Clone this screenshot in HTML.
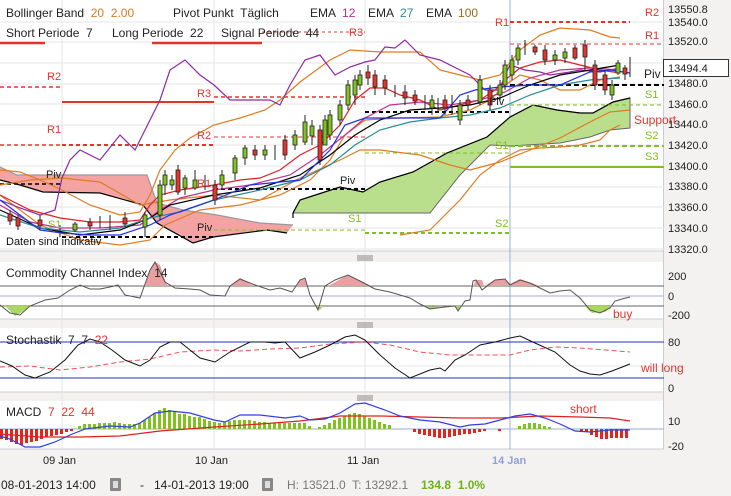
<!DOCTYPE html>
<html><head><meta charset="utf-8"><style>
body{margin:0;width:731px;height:496px;background:#f3f2f0;font-family:"Liberation Sans",sans-serif;overflow:hidden;position:relative}
svg{position:absolute;left:0;top:0}
text{font-family:"Liberation Sans",sans-serif;white-space:pre}
</style></head><body>
<svg width="731" height="496" viewBox="0 0 731 496" xml:space="preserve">
<rect x="0" y="0" width="664" height="251" fill="#fff"/>
<rect x="0" y="262" width="664" height="57" fill="#fff"/>
<rect x="0" y="328" width="664" height="64" fill="#fff"/>
<rect x="0" y="401" width="664" height="48" fill="#fff"/>
<g stroke="#c9cdd3" stroke-width="1">
<line x1="0" y1="251" x2="664" y2="251"/><line x1="0" y1="319" x2="664" y2="319"/><line x1="0" y1="392" x2="664" y2="392"/><line x1="0" y1="449" x2="664" y2="449"/>
<line x1="663.5" y1="0" x2="663.5" y2="449"/>
</g>
<g stroke="#e6e6e6" stroke-width="1">
<line x1="0" y1="22" x2="664" y2="22"/><line x1="0" y1="42" x2="664" y2="42"/><line x1="0" y1="63" x2="664" y2="63"/><line x1="0" y1="84" x2="664" y2="84"/><line x1="0" y1="104" x2="664" y2="104"/><line x1="0" y1="125" x2="664" y2="125"/><line x1="0" y1="145" x2="664" y2="145"/><line x1="0" y1="166" x2="664" y2="166"/><line x1="0" y1="187" x2="664" y2="187"/><line x1="0" y1="207" x2="664" y2="207"/><line x1="0" y1="228" x2="664" y2="228"/><line x1="0" y1="249" x2="664" y2="249"/>
<line x1="62" y1="0" x2="62" y2="449"/><line x1="214" y1="0" x2="214" y2="449"/><line x1="365" y1="0" x2="365" y2="449"/>
<line x1="0" y1="366" x2="664" y2="366"/>
</g>
<line x1="510" y1="0" x2="510" y2="449" stroke="#9aaedb"/>
<g stroke="#888"><line x1="357" y1="256" x2="373" y2="256"/><line x1="357" y1="258" x2="373" y2="258"/><line x1="357" y1="260" x2="373" y2="260"/>
<line x1="357" y1="323" x2="373" y2="323"/><line x1="357" y1="325" x2="373" y2="325"/><line x1="357" y1="327" x2="373" y2="327"/>
<line x1="357" y1="396" x2="373" y2="396"/><line x1="357" y1="398" x2="373" y2="398"/><line x1="357" y1="400" x2="373" y2="400"/></g>

<!-- clouds -->
<polygon points="0,167 17,175 147,175 157,203 183,210 217,215 260,223 293,225 287,233 267,230 213,237 193,243 157,223 143,205 100,193 43,192 20,185 0,180" fill="#f4a3a3"/>
<polyline points="0,167 17,175 147,175 157,203 183,210 217,215 260,223 293,225" fill="none" stroke="#999" stroke-width="1.2"/>
<polyline points="0,180 20,185 43,192 100,193 143,205 157,223 193,243 213,237 267,230 287,233" fill="none" stroke="#000" stroke-width="1.2"/>
<polygon points="293,213 300,200 340,187 363,192 380,182 413,172 447,153 487,137 510,117 533,105 557,110 580,113 593,113 613,102 630,98 630,128 610,130 590,137 560,143 510,146 490,145 460,175 430,213" fill="#b9df8c" stroke="#666" stroke-width="1"/>
<polyline points="293,218 293,213 300,200 340,187 363,192 380,182 413,172 447,153 487,137 510,117 533,105 557,110 580,113 593,113 613,102 630,98" fill="none" stroke="#000" stroke-width="1.2"/>

<g stroke-width="1.5" fill="none">
<line x1="0" y1="87" x2="62" y2="87" stroke="#e3342c" stroke-dasharray="4,3"/>
<line x1="0" y1="145" x2="62" y2="145" stroke="#e3342c" stroke-dasharray="4,3"/>
<line x1="0" y1="184" x2="62" y2="184" stroke="#000" stroke-dasharray="4,3"/>
<line x1="62" y1="102" x2="214" y2="102" stroke="#e3342c" stroke-width="2"/>
<line x1="62" y1="145" x2="214" y2="145" stroke="#e3342c" stroke-dasharray="4,3" stroke-width="2"/>
<line x1="62" y1="237" x2="214" y2="237" stroke="#000" stroke-dasharray="4,3" stroke-width="2"/>
<line x1="152" y1="43" x2="262" y2="43" stroke="#e3342c" stroke-width="2.5"/>
<line x1="0" y1="43" x2="45" y2="43" stroke="#e3342c" stroke-width="2.5"/>
<line x1="214" y1="97" x2="365" y2="97" stroke="#e3342c" stroke-dasharray="4,3"/>
<line x1="214" y1="137" x2="365" y2="137" stroke="#e3342c" stroke-dasharray="4,3" stroke-width="1"/>
<line x1="214" y1="189" x2="365" y2="189" stroke="#000" stroke-dasharray="4,3" stroke-width="2"/>
<line x1="214" y1="230" x2="365" y2="230" stroke="#7fbf1f" stroke-dasharray="4,3" stroke-width="1"/>
<line x1="262" y1="32" x2="365" y2="32" stroke="#e3342c" stroke-dasharray="3,3" stroke-width="1"/>
<line x1="365" y1="112" x2="510" y2="112" stroke="#000" stroke-dasharray="4,3" stroke-width="2"/>
<line x1="365" y1="233" x2="510" y2="233" stroke="#7fbf1f" stroke-dasharray="4,3" stroke-width="2"/>
<line x1="365" y1="153" x2="510" y2="153" stroke="#7fbf1f" stroke-dasharray="4,3" stroke-width="1"/>
<line x1="510" y1="22" x2="630" y2="22" stroke="#e3342c" stroke-dasharray="4,3" stroke-width="2"/>
<line x1="510" y1="44" x2="664" y2="44" stroke="#e3342c" stroke-dasharray="4,3" stroke-width="1"/>
<line x1="510" y1="85" x2="664" y2="85" stroke="#000" stroke-dasharray="5,3" stroke-width="2"/>
<line x1="510" y1="105" x2="664" y2="105" stroke="#7fbf1f" stroke-dasharray="4,3" stroke-width="1"/>
<line x1="510" y1="146" x2="664" y2="146" stroke="#7fbf1f" stroke-dasharray="5,3" stroke-width="2"/>
<line x1="510" y1="167" x2="664" y2="167" stroke="#7fbf1f" stroke-width="2"/>
</g>

<g fill="none" stroke-width="1.2">
<polyline stroke="#e07b20" points="0,170 20,172 40,180 62,190 90,205 120,215 140,212 150,195 160,170 175,150 190,138 214,125 240,118 265,110 280,100 300,82 330,60 350,50 380,52 420,52 440,70 460,75 480,80 500,75 520,50 540,35 560,28 590,30 610,37 620,38"/>
<polyline stroke="#e07b20" points="0,195 40,225 80,240 120,245 150,240 165,225 200,210 240,205 280,195 310,180 330,160 345,135 365,120 400,118 440,117 470,110 490,100 505,85 520,75 540,80 560,90 580,90 600,80 620,77"/>
<polyline stroke="#e07b20" points="400,235 430,230 460,200 480,175 500,160 520,150 540,148 560,147 580,145 600,140 610,130 620,125"/>
<polyline stroke="#e07b20" points="0,185 30,180 62,178 100,182 140,205 170,200 214,195 260,200 300,178 340,160 360,150 380,150 420,155 450,165 470,170 500,162 530,150 560,138 590,122 610,112 630,110"/>
<polyline stroke="#8e2aa4" points="0,200 20,208 40,215 55,210 62,178 70,160 80,150 100,160 120,135 135,150 150,120 160,100 170,70 185,60 200,75 214,85 230,100 250,100 270,100 280,105 290,85 305,60 320,55 335,75 350,67 365,62 375,60 385,47 395,48 405,40 420,55 440,60 460,70 470,75 485,90 500,90 505,75 510,65 525,70 540,72 550,75 570,72 580,70 600,72 620,68"/>
<polyline stroke="#e02020" points="0,195 30,210 60,218 90,222 120,222 140,220 150,205 160,195 180,190 214,185 240,180 260,178 280,170 300,155 320,145 340,125 355,100 370,88 385,88 400,95 420,100 440,110 460,105 480,100 495,90 505,80 520,68 540,62 560,60 580,65 600,70 620,73"/>
<polyline stroke="#c03090" points="0,205 30,222 60,228 100,228 140,225 160,210 180,198 214,190 250,185 290,175 320,155 345,135 365,118 390,105 420,102 450,105 480,100 505,92 530,78 560,70 590,68 620,70"/>
<polyline stroke="#000" points="0,210 40,228 80,235 120,230 150,218 170,205 214,195 260,188 300,175 330,155 355,135 380,120 410,110 440,108 470,105 500,98 530,85 560,75 590,70 620,65"/>
<polyline stroke="#2a8a9a" points="0,215 40,228 80,232 120,228 150,218 180,212 214,200 260,190 300,180 330,165 355,145 380,130 410,122 440,118 470,115 500,108 530,95 560,85 590,80 620,78"/>
<polyline stroke="#2030e0" points="0,200 20,215 40,230 62,233 90,235 120,235 150,225 170,215 214,200 250,185 300,180 330,150 345,125 365,118 440,118 460,95 475,90 500,87 530,85 560,85 590,72 610,70 630,73"/>
</g>

<g stroke="#222" stroke-width="1">
<path d="M10,210v15M18,215v15M40,215v15M60,225v12M75,222v10M90,218v12M100,216v12M110,215v15M125,212v15M145,212v25M160,180v40M165,170v25M172,175v15M178,165v30M185,175v20M195,170v20M205,175v15M215,180v25M222,170v20M235,155v25M245,145v20M255,145v15M265,145v15M275,145v15M285,135v25M295,130v20M305,115v30M312,120v25M320,125v40M325,115v30M330,110v30M340,100v25M348,80v30M355,75v30M360,70v20M368,65v20M375,70v25M385,75v20M395,85v12M405,85v20M415,90v15M425,95v15M432,95v20M438,98v15M445,95v20M452,95v20M460,100v25M468,95v15M480,75v30M490,85v25M500,80v20M505,60v30M512,55v25M518,45v20M525,40v15M535,45v10M545,45v20M555,50v15M565,48v15M575,45v15M585,40v30M595,60v30M605,70v25M612,80v20M618,60v15M625,65v15M630,57v20"/>
</g>
<g stroke="#222" stroke-width="0.8">
<rect x="8" y="214" width="4" height="7" fill="#e8322a"/><rect x="16" y="218" width="4" height="8" fill="#e8322a"/><rect x="38" y="220" width="4" height="6" fill="#e8322a"/>
<rect x="73" y="224" width="4" height="6" fill="#7fc31c"/><rect x="88" y="222" width="4" height="4" fill="#e8322a"/><rect x="123" y="218" width="4" height="6" fill="#e8322a"/><rect x="143" y="215" width="4" height="12" fill="#7fc31c"/>
<rect x="158" y="185" width="4" height="30" fill="#7fc31c"/><rect x="163" y="175" width="4" height="10" fill="#7fc31c"/><rect x="170" y="180" width="4" height="5" fill="#7fc31c"/><rect x="176" y="170" width="4" height="22" fill="#e8322a"/>
<rect x="183" y="178" width="4" height="10" fill="#7fc31c"/><rect x="193" y="180" width="4" height="8" fill="#7fc31c"/><rect x="213" y="185" width="4" height="15" fill="#e8322a"/><rect x="220" y="175" width="4" height="10" fill="#7fc31c"/>
<rect x="233" y="158" width="4" height="15" fill="#7fc31c"/><rect x="243" y="148" width="4" height="10" fill="#7fc31c"/><rect x="253" y="150" width="4" height="5" fill="#e8322a"/><rect x="263" y="150" width="4" height="5" fill="#7fc31c"/>
<rect x="283" y="140" width="4" height="15" fill="#e8322a"/><rect x="293" y="135" width="4" height="10" fill="#7fc31c"/><rect x="303" y="122" width="4" height="20" fill="#7fc31c"/><rect x="310" y="126" width="4" height="10" fill="#7fc31c"/>
<rect x="318" y="130" width="4" height="30" fill="#e8322a"/><rect x="323" y="120" width="4" height="25" fill="#7fc31c"/><rect x="328" y="115" width="4" height="20" fill="#7fc31c"/><rect x="338" y="105" width="4" height="15" fill="#7fc31c"/>
<rect x="346" y="85" width="4" height="20" fill="#7fc31c"/><rect x="353" y="80" width="4" height="15" fill="#7fc31c"/><rect x="358" y="75" width="4" height="10" fill="#7fc31c"/><rect x="366" y="72" width="4" height="6" fill="#e8322a"/>
<rect x="373" y="75" width="4" height="12" fill="#e8322a"/><rect x="383" y="80" width="4" height="8" fill="#e8322a"/><rect x="403" y="92" width="4" height="6" fill="#e8322a"/><rect x="413" y="95" width="4" height="6" fill="#e8322a"/>
<rect x="430" y="100" width="4" height="8" fill="#7fc31c"/><rect x="443" y="100" width="4" height="8" fill="#e8322a"/><rect x="458" y="105" width="4" height="15" fill="#7fc31c"/><rect x="466" y="100" width="4" height="5" fill="#e8322a"/>
<rect x="478" y="80" width="4" height="22" fill="#7fc31c"/><rect x="488" y="90" width="4" height="15" fill="#e8322a"/><rect x="498" y="85" width="4" height="10" fill="#7fc31c"/><rect x="503" y="65" width="4" height="20" fill="#7fc31c"/>
<rect x="510" y="60" width="4" height="15" fill="#7fc31c"/><rect x="516" y="48" width="4" height="12" fill="#7fc31c"/><rect x="533" y="47" width="4" height="5" fill="#e8322a"/><rect x="543" y="50" width="4" height="10" fill="#e8322a"/>
<rect x="553" y="55" width="4" height="5" fill="#7fc31c"/><rect x="563" y="52" width="4" height="6" fill="#7fc31c"/><rect x="573" y="48" width="4" height="10" fill="#e8322a"/><rect x="583" y="45" width="4" height="12" fill="#e8322a"/>
<rect x="593" y="65" width="4" height="20" fill="#e8322a"/><rect x="603" y="75" width="4" height="15" fill="#e8322a"/><rect x="610" y="85" width="4" height="10" fill="#7fc31c"/><rect x="616" y="63" width="4" height="10" fill="#7fc31c"/>
<rect x="623" y="68" width="4" height="6" fill="#e8322a"/>
</g>

<g font-size="11" fill="#e3342c">
<text x="47" y="80">R2</text><text x="47" y="133">R1</text><text x="197" y="97">R3</text><text x="197" y="139">R2</text><text x="197" y="187">R1</text>
<text x="349" y="36">R3</text><text x="495" y="26">R1</text><text x="645" y="16">R2</text><text x="645" y="39">R1</text>
<text x="634" y="124" font-size="12">Support</text>
</g>
<g font-size="11" fill="#7fbf1f"><text x="645" y="98">S1</text><text x="645" y="139">S2</text><text x="645" y="160">S3</text><text x="348" y="222">S1</text><text x="495" y="227">S2</text><text x="495" y="149">S1</text><text x="48" y="228">S1</text></g>
<g font-size="11" fill="#222"><text x="46" y="178">Piv</text><text x="197" y="231">Piv</text><text x="340" y="184">Piv</text><text x="489" y="105">Piv</text><text x="644" y="78" font-size="12">Piv</text></g>
<text x="6" y="245" font-size="11" fill="#111">Daten sind indikativ</text>

<g font-size="12" fill="#222">
<text x="6" y="17">Bollinger Band  <tspan fill="#d77a20">20</tspan>  <tspan fill="#d77a20">2.00</tspan></text>
<text x="173" y="17">Pivot Punkt  Täglich</text>
<text x="310" y="17">EMA  <tspan fill="#b03090">12</tspan></text>
<text x="368" y="17">EMA  <tspan fill="#2a8a9a">27</tspan></text>
<text x="426" y="17">EMA  <tspan fill="#9a6a20">100</tspan></text>
<text x="6" y="37">Short Periode  7</text>
<text x="112" y="37">Long Periode  22</text>
<text x="158" y="37">                                                                           </text>
<text x="221" y="37">Signal Periode  44</text>
</g>

<g font-size="11" fill="#222">
<text x="668" y="13">13550.8</text><text x="668" y="26">13540.0</text><text x="668" y="45">13520.0</text><text x="668" y="87">13480.0</text><text x="668" y="108">13460.0</text><text x="668" y="128">13440.0</text><text x="668" y="149">13420.0</text><text x="668" y="170">13400.0</text><text x="668" y="190">13380.0</text><text x="668" y="211">13360.0</text><text x="668" y="232">13340.0</text><text x="668" y="253">13320.0</text>
</g>
<rect x="663.5" y="59.5" width="65" height="17" fill="#fff" stroke="#333"/>
<text x="668" y="72" font-size="11" fill="#222">13494.4</text>

<line x1="0" y1="286" x2="664" y2="286" stroke="#666"/><line x1="0" y1="296" x2="664" y2="296" stroke="#aac"/><line x1="0" y1="306" x2="664" y2="306" stroke="#666"/>
<g fill="#e8a0a0"><polygon points="145,286 150,270 155,262 160,265 165,280 168,286"/><polygon points="230,286 240,278 250,284 255,286"/><polygon points="297,286 300,280 305,279 308,286"/><polygon points="328,286 348,275 360,281 372,286"/><polygon points="473,286 476,280 482,280 484,286 495,280 505,279 510,284 520,279 540,286"/></g>
<g fill="#a8d860"><polygon points="0,306 5,306 15,316 22,312 30,306"/><polygon points="315,306 320,310 323,306"/><polygon points="425,306 430,309 440,307"/><polygon points="455,306 458,311 462,306"/><polygon points="585,306 592,313 605,312 612,306"/></g>
<polyline fill="none" stroke="#555" points="0,305 10,313 20,315 30,306 45,300 58,298 70,290 80,285 90,289 100,289 110,287 118,285 125,295 140,298 150,270 155,262 165,282 175,288 190,289 200,290 210,295 225,296 230,286 240,279 250,283 255,285 270,290 280,288 292,292 300,280 305,278 310,295 318,310 325,286 335,280 348,275 362,282 375,289 390,292 400,295 410,298 420,304 430,309 445,307 455,306 458,311 465,301 470,300 473,281 476,280 482,290 495,280 505,279 510,285 520,280 530,283 540,288 550,293 560,291 570,290 580,298 590,310 600,313 610,308 615,301 622,299 630,297"/>
<text x="6" y="277" font-size="12" fill="#222">Commodity Channel Index  14</text>
<text x="613" y="318" font-size="12" fill="#e3342c">buy</text>
<g font-size="11" fill="#222"><text x="668" y="280">200</text><text x="668" y="300">0</text><text x="668" y="319">-200</text></g>

<line x1="0" y1="342" x2="664" y2="342" stroke="#2230c0"/><line x1="0" y1="378" x2="664" y2="378" stroke="#2230c0"/>
<polyline fill="none" stroke="#f05050" stroke-dasharray="5,3" points="0,367 30,366 60,370 90,367 120,362 150,359 180,352 214,350 240,351 270,349 300,348 330,344 365,342 390,345 420,352 450,355 480,355 510,355 530,350 555,347 580,348 605,350 630,352"/>
<polyline fill="none" stroke="#111" points="0,361 12,366 25,375 35,378 50,372 65,360 78,345 90,339 100,342 112,350 125,360 140,366 150,360 160,347 170,342 180,342 190,350 200,358 215,362 230,352 250,342 265,342 275,343 285,342 300,358 315,352 330,345 345,337 355,335 365,340 380,355 395,368 410,378 430,370 440,368 445,371 455,360 465,355 480,345 495,342 510,338 520,336 535,343 555,352 570,365 580,371 590,374 600,375 612,371 630,364"/>
<text x="6" y="344" font-size="12" fill="#222">Stochastik  7  7  <tspan fill="#e3342c">22</tspan></text>
<text x="641" y="372" font-size="12" fill="#e3342c">will long</text>
<g font-size="11" fill="#222"><text x="668" y="346">80</text><text x="668" y="392">0</text></g>

<line x1="0" y1="429" x2="664" y2="429" stroke="#9aaed0"/>
<g fill="#e3251c"><rect x="0" y="429" width="3" height="10"/><rect x="5" y="429" width="3" height="11"/><rect x="10" y="429" width="3" height="13"/><rect x="15" y="429" width="3" height="15"/><rect x="20" y="429" width="3" height="16"/><rect x="25" y="429" width="3" height="14"/><rect x="30" y="429" width="3" height="13"/><rect x="35" y="429" width="3" height="12"/><rect x="40" y="429" width="3" height="10"/><rect x="45" y="429" width="3" height="8"/><rect x="50" y="429" width="3" height="7"/><rect x="55" y="429" width="3" height="6"/><rect x="60" y="429" width="3" height="5"/><rect x="65" y="429" width="3" height="3"/><rect x="70" y="429" width="3" height="2"/>
<rect x="413" y="429" width="3" height="3"/><rect x="418" y="429" width="3" height="5"/><rect x="423" y="429" width="3" height="6"/><rect x="428" y="429" width="3" height="7"/><rect x="433" y="429" width="3" height="8"/><rect x="438" y="429" width="3" height="9"/><rect x="443" y="429" width="3" height="9"/><rect x="448" y="429" width="3" height="8"/><rect x="453" y="429" width="3" height="7"/><rect x="458" y="429" width="3" height="6"/><rect x="463" y="429" width="3" height="5"/><rect x="468" y="429" width="3" height="5"/><rect x="473" y="429" width="3" height="4"/><rect x="478" y="429" width="3" height="3"/><rect x="483" y="429" width="3" height="2"/><rect x="498" y="429" width="3" height="2"/>
<rect x="580" y="429" width="3" height="2"/><rect x="585" y="429" width="3" height="3"/><rect x="590" y="429" width="3" height="6"/><rect x="595" y="429" width="3" height="8"/><rect x="600" y="429" width="3" height="10"/><rect x="605" y="429" width="3" height="10"/><rect x="610" y="429" width="3" height="9"/><rect x="615" y="429" width="3" height="9"/><rect x="620" y="429" width="3" height="9"/><rect x="625" y="429" width="3" height="9"/></g>
<g fill="#7fc31c"><rect x="78" y="426" width="3" height="3"/><rect x="83" y="424" width="3" height="5"/><rect x="88" y="424" width="3" height="5"/><rect x="93" y="424" width="3" height="5"/><rect x="98" y="423" width="3" height="6"/><rect x="103" y="423" width="3" height="6"/><rect x="108" y="423" width="3" height="6"/><rect x="113" y="422" width="3" height="7"/><rect x="118" y="423" width="3" height="6"/><rect x="123" y="424" width="3" height="5"/><rect x="128" y="424" width="3" height="5"/><rect x="133" y="424" width="3" height="5"/><rect x="138" y="423" width="3" height="6"/><rect x="143" y="420" width="3" height="9"/><rect x="148" y="417" width="3" height="12"/><rect x="153" y="413" width="3" height="16"/><rect x="158" y="410" width="3" height="19"/><rect x="163" y="408" width="3" height="21"/><rect x="168" y="410" width="3" height="19"/><rect x="173" y="412" width="3" height="17"/><rect x="178" y="414" width="3" height="15"/><rect x="183" y="414" width="3" height="15"/><rect x="188" y="416" width="3" height="13"/><rect x="193" y="417" width="3" height="12"/><rect x="198" y="417" width="3" height="12"/><rect x="203" y="419" width="3" height="10"/><rect x="208" y="421" width="3" height="8"/><rect x="213" y="422" width="3" height="7"/><rect x="218" y="423" width="3" height="6"/><rect x="223" y="422" width="3" height="7"/><rect x="228" y="421" width="3" height="8"/><rect x="233" y="420" width="3" height="9"/><rect x="238" y="420" width="3" height="9"/><rect x="243" y="420" width="3" height="9"/><rect x="248" y="420" width="3" height="9"/><rect x="253" y="421" width="3" height="8"/><rect x="258" y="422" width="3" height="7"/><rect x="263" y="422" width="3" height="7"/><rect x="268" y="423" width="3" height="6"/><rect x="273" y="423" width="3" height="6"/><rect x="278" y="423" width="3" height="6"/><rect x="283" y="423" width="3" height="6"/><rect x="288" y="423" width="3" height="6"/><rect x="293" y="423" width="3" height="6"/><rect x="298" y="423" width="3" height="6"/><rect x="303" y="423" width="3" height="6"/><rect x="308" y="426" width="3" height="3"/><rect x="318" y="427" width="3" height="2"/><rect x="323" y="425" width="3" height="4"/><rect x="328" y="423" width="3" height="6"/><rect x="333" y="420" width="3" height="9"/><rect x="338" y="418" width="3" height="11"/><rect x="343" y="416" width="3" height="13"/><rect x="348" y="414" width="3" height="15"/><rect x="353" y="413" width="3" height="16"/><rect x="358" y="414" width="3" height="15"/><rect x="363" y="416" width="3" height="13"/><rect x="368" y="418" width="3" height="11"/><rect x="373" y="420" width="3" height="9"/><rect x="378" y="422" width="3" height="7"/><rect x="383" y="424" width="3" height="5"/><rect x="388" y="425" width="3" height="4"/><rect x="518" y="426" width="3" height="3"/><rect x="523" y="424" width="3" height="5"/><rect x="528" y="423" width="3" height="6"/><rect x="533" y="423" width="3" height="6"/><rect x="538" y="424" width="3" height="5"/><rect x="543" y="426" width="3" height="3"/><rect x="548" y="427" width="3" height="2"/></g>
<polyline fill="none" stroke="#e02020" stroke-width="1.2" points="0,434 40,437 80,437 120,436 160,431 214,427 260,424 300,421 340,416 380,416 420,417 460,418 500,418 540,416 580,417 610,418 630,421"/>
<polyline fill="none" stroke="#3040e0" stroke-width="1.2" points="0,436 10,439 25,447 40,447 55,442 70,435 85,429 110,426 130,427 140,423 155,413 170,411 190,413 214,420 225,422 240,415 260,415 285,418 300,416 310,420 325,419 340,413 355,404 365,403 385,410 400,416 420,420 440,422 460,427 470,425 485,424 500,420 515,416 530,414 545,418 560,424 575,431 590,432 610,430 630,430"/>
<text x="6" y="416" font-size="12" fill="#222">MACD  <tspan fill="#e3342c">7  22  44</tspan></text>
<text x="570" y="413" font-size="12" fill="#e3342c">short</text>
<g font-size="11" fill="#222"><text x="668" y="425">10</text><text x="668" y="450">-20</text></g>

<g font-size="11" fill="#222"><text x="43" y="464">09 Jan</text><text x="195" y="464">10 Jan</text><text x="347" y="464">11 Jan</text><text x="492" y="464" fill="#8fa2d4" font-weight="bold">14 Jan</text></g>

<g font-size="12" fill="#222"><text x="1" y="489">08-01-2013 14:00</text><text x="140" y="489">-</text><text x="154" y="489">14-01-2013 19:00</text>
<text x="287" y="489" fill="#777">H: 13521.0  T: 13292.1</text><text x="421" y="489" fill="#6cb31a" font-weight="bold">134.8  1.0%</text></g>
<g fill="#888"><rect x="110" y="478" width="11" height="13" rx="1"/><rect x="262" y="478" width="11" height="13" rx="1"/></g>
<g fill="#ddd"><rect x="113" y="481" width="5" height="7"/><rect x="265" y="481" width="5" height="7"/></g>
</svg>
</body></html>
